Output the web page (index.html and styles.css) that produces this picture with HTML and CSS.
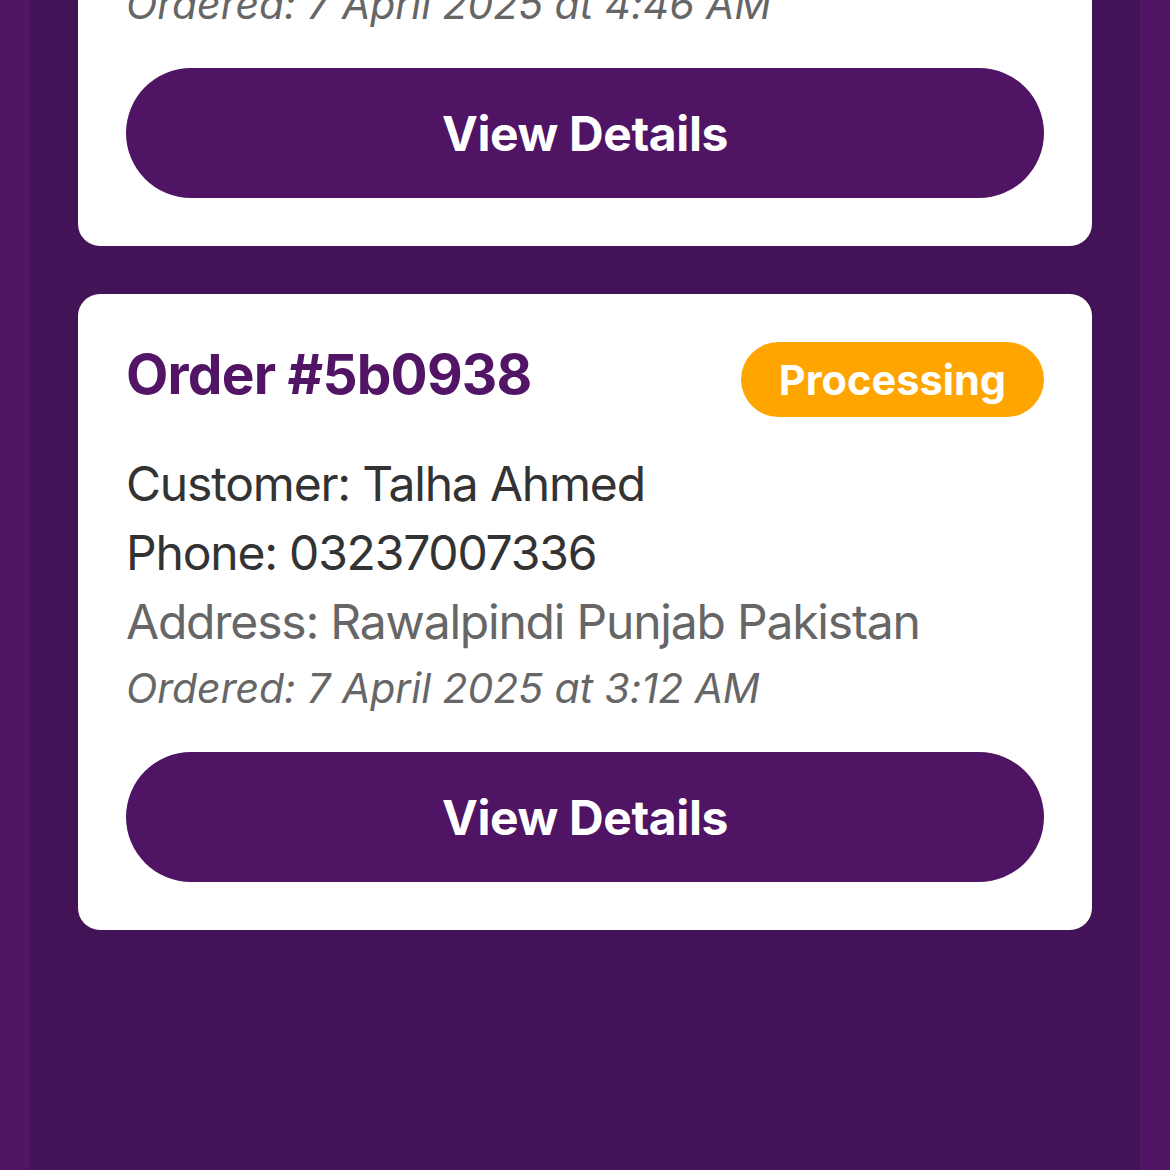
FILE: index.html
```html
<!DOCTYPE html>
<html>
<head>
<meta charset="utf-8">
<link rel="stylesheet" href="styles.css">
</head>
<body>
<div class="frame">
  <main class="list">
    <section class="card">
      <div class="card-head">
        <h2 class="order-id">Order #a71c24</h2>
        <span class="badge">Processing</span>
      </div>
      <p class="line">Customer: Talha Ahmed</p>
      <p class="line">Phone: 03237007336</p>
      <p class="line muted">Address: Rawalpindi Punjab Pakistan</p>
      <p class="date">Ordered: 7 April 2025 at 4:46 AM</p>
      <button class="btn">View Details</button>
    </section>
    <section class="card">
      <div class="card-head">
        <h2 class="order-id">Order #5b0938</h2>
        <span class="badge">Processing</span>
      </div>
      <p class="line">Customer: Talha Ahmed</p>
      <p class="line">Phone: 03237007336</p>
      <p class="line muted">Address: Rawalpindi Punjab Pakistan</p>
      <p class="date">Ordered: 7 April 2025 at 3:12 AM</p>
      <button class="btn">View Details</button>
    </section>
  </main>
</div>
</body>
</html>
```
FILE: styles.css
```css
html, body {
  margin: 0;
  padding: 0;
  height: 100%;
  overflow: hidden;
}
body {
  background: #501565;
  font-family: Inter, "Noto Sans", sans-serif;
}
.frame {
  margin: 0 30px;
  background: #441256;
  height: 100%;
  overflow: hidden;
}
.list {
  display: flex;
  flex-direction: column;
  gap: 48px;
  padding: 0 48px;
  margin-top: -390px;
}
.card {
  background: #fff;
  border-radius: 22px;
  padding: 48px;
  display: flex;
  flex-direction: column;
}
.card-head {
  display: flex;
  justify-content: space-between;
  align-items: center;
  height: 75px;
  margin-bottom: 32px;
}
.order-id {
  margin: 0 0 12px 0;
  font-size: 55px;
  font-weight: 700;
  color: #521565;
  letter-spacing: -0.8px;
}
.badge {
  background: #ffa500;
  color: #fff;
  font-weight: 700;
  font-size: 41.5px;
  height: 75px;
  display: flex;
  align-items: center;
  padding: 0 38px;
  border-radius: 38px;
}
.line {
  margin: 0;
  font-size: 48px;
  line-height: 69px;
  color: #333;
  letter-spacing: -1.2px;
}
.muted {
  color: #666;
}
.date {
  margin: 0;
  font-size: 41px;
  line-height: 64px;
  font-style: italic;
  color: #666;
  letter-spacing: -0.05px;
}
.btn {
  margin-top: 32px;
  height: 130px;
  border: none;
  border-radius: 65px;
  background: #4f1463;
  color: #fff;
  font-family: Inter, "Noto Sans", sans-serif;
  font-size: 48px;
  font-weight: 700;
  letter-spacing: -0.4px;
}
```
